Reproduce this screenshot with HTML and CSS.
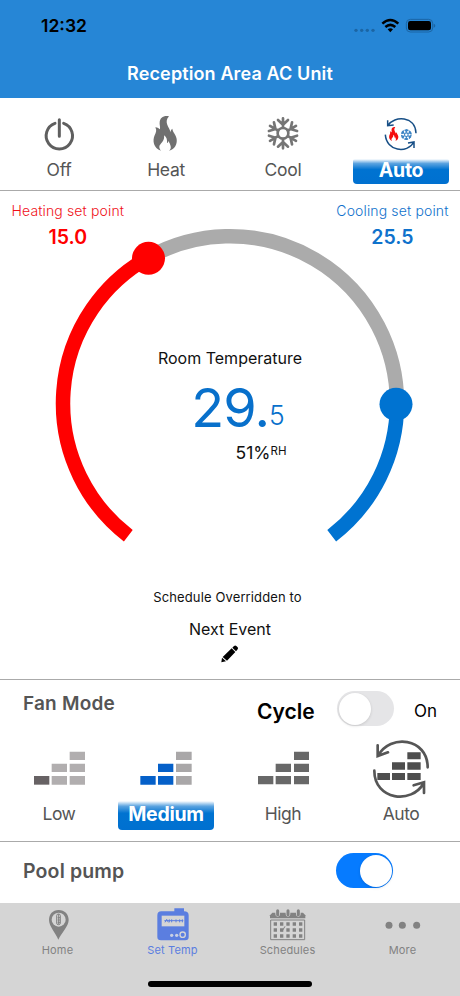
FILE: index.html
```html
<!DOCTYPE html>
<html lang="en">
<head>
<meta charset="utf-8">
<title>Reception Area AC Unit</title>
<link rel="stylesheet" href="styles.css">
</head>
<body>
<header class="header">
  <div class="status">
    <span class="clock">12:32</span>
    <svg class="status-icons" viewBox="1060 50 252 50">
      <g fill="#1b65a4"><circle cx="1069" cy="90" r="5"/><circle cx="1086" cy="90" r="5"/><circle cx="1103" cy="90" r="5"/><circle cx="1120" cy="90" r="5"/></g>
      <g fill="none" stroke="#000" stroke-width="7.5"><path d="M1148 70Q1172 48 1196 70"/><path d="M1157 80Q1172 67 1187 80"/></g>
      <path d="M1164 87Q1172 80 1180 87L1172 96Z"/>
      <rect x="1220" y="57" width="79" height="38" rx="12" fill="none" stroke="#1b65a4" stroke-width="3"/>
      <rect x="1225" y="62" width="69" height="28" rx="7"/>
      <path d="M1302 70q5 1 5 6t-5 6z" fill="#1b65a4"/>
    </svg>
  </div>
  <h1 class="title">Reception Area AC Unit</h1>
</header>

<nav class="modes">
  <div class="mode">
    <svg class="mode-icon" viewBox="117 42 120 120" fill="none" stroke="#5f5f5f" stroke-width="9" stroke-linecap="round"><path d="M165 70A39.500 39.500 0 1 0 191 70M178 59V109"/></svg>
    <span class="label off">Off</span>
  </div>
  <div class="mode">
    <svg class="mode-icon" viewBox="438 42 120 120" fill="#707070"><path id="flame" d="M507 49C490 46 480 54 479 67C478 74 481 78 480 88C477 86 473 82 466 82C471 91 468 98 464 106C457 122 460 145 483 152C476 144 477 137 482 132C488 125 494 119 492 106C500 111 502 120 501 129C504 128 505 126 505 122C511 133 517 145 507 152C525 147 532 133 530 117C528 103 518 97 517 86C513 89 512 92 512 97C509 82 490 68 507 49Z"/></svg>
    <span class="label heat">Heat</span>
  </div>
  <div class="mode">
    <svg class="mode-icon" viewBox="99 42 120 120" fill="none" stroke="#757575" stroke-width="8" stroke-linecap="round">
      <defs><path id="arm" d="M0-17V-45M0-26L-15-40M0-26L15-40"/></defs>
      <g transform="translate(159 100)"><circle r="16"/><use href="#arm"/><use href="#arm" transform="rotate(60)"/><use href="#arm" transform="rotate(120)"/><use href="#arm" transform="rotate(180)"/><use href="#arm" transform="rotate(240)"/><use href="#arm" transform="rotate(300)"/></g>
    </svg>
    <span class="label cool">Cool</span>
  </div>
  <div class="mode">
    <svg class="mode-icon" viewBox="453 42 120 120">
      <g fill="none" stroke="#174f86" stroke-width="4.500"><path d="M473 77C493 45 557 48 558 100M473 61V77L491 75M466 104C469 153 531 163 552 126M534 129L552 126V144"/></g>
      <use href="#flame" fill="#f50d0d" transform="translate(295.500 62) scale(.395 .4)"/>
      <g transform="translate(529 104) scale(.36)" fill="none" stroke="#3a83c4" stroke-width="9"><circle r="15"/><circle r="40" stroke-dasharray="28 13.900" stroke-dashoffset="-7"/><use href="#arm"/><use href="#arm" transform="rotate(60)"/><use href="#arm" transform="rotate(120)"/><use href="#arm" transform="rotate(180)"/><use href="#arm" transform="rotate(240)"/><use href="#arm" transform="rotate(300)"/></g>
    </svg>
    <span class="label active">Auto</span>
  </div>
</nav>

<main class="dial">
  <svg class="ring" viewBox="0 191 460 365" fill="none" stroke-width="14.500">
    <path stroke="#ababab" d="M148.500 257.500A167 167 0 0 1 397 403.500"/>
    <path stroke="#f00" d="M128.300 535.700A167 167 0 0 1 148.500 257.500"/>
    <path stroke="#0073d1" d="M397 403.500A167 167 0 0 1 331.700 535.700"/>
    <circle cx="148.500" cy="258.300" r="16.500" fill="#f00"/>
    <circle cx="396" cy="404.300" r="16.500" fill="#0073d1"/>
  </svg>
  <div class="dial-text">
    <div class="points">
      <div class="point heating"><span class="point-name">Heating set point</span><b class="point-value">15.0</b></div>
      <div class="point cooling"><span class="point-name">Cooling set point</span><b class="point-value">25.5</b></div>
    </div>
    <div class="room">Room Temperature</div>
    <div class="temp"><span class="whole">29.</span><span class="tenth">5</span></div>
    <div class="humidity"><span class="rh-value">51%</span><span class="rh">RH</span></div>
    <div class="override">Schedule Overridden to</div>
    <div class="event">Next Event</div>
    <svg class="pencil" viewBox="515 436 54 54"><path d="M516 488L518 474L530 485ZM520 472L547 446L558 457L533 483ZM549 444L554 439Q558 436 561 439L565 443Q568 446 564 450L560 455Z"/></svg>
  </div>
</main>

<section class="fan">
  <div class="fan-head">
    <h2 class="fan-title">Fan Mode</h2>
    <span class="cycle">Cycle</span>
    <span class="switch"></span>
    <span class="on">On</span>
  </div>
  <div class="speeds">
    <div class="speed">
      <svg class="speed-icon" viewBox="84 174 186 186" fill="#b1aeaf"><path fill="#676264" d="M102 288h46v26h-46z"/><path d="M155 288h46v26h-46zM209 288h46v26h-46zM155 251h46v25h-46zM209 251h46v25h-46zM209 215h46v25h-46z"/></svg>
      <span class="label low">Low</span>
    </div>
    <div class="speed">
      <svg class="speed-icon" viewBox="405 174 186 186" fill="#0560c9"><path d="M421 288h46v26h-46zM474 288h46v26h-46zM474 251h46v25h-46z"/><path fill="#a9a7a8" d="M528 288h47v26h-47zM528 251h47v25h-47zM528 215h47v25h-47z"/></svg>
      <span class="label active">Medium</span>
    </div>
    <div class="speed">
      <svg class="speed-icon" viewBox="66 174 186 186" fill="#686868"><path d="M84 288h46v25h-46zM137 288h46v25h-46zM192 288h45v25h-45zM137 251h46v25h-46zM192 251h45v25h-45zM192 215h45v25h-45z"/></svg>
      <span class="label high">High</span>
    </div>
    <div class="speed">
      <svg class="speed-icon" viewBox="421 174 186 186" fill="#4e4e4e"><path d="M443 279h38v21h-38zM487 279h39v21h-39zM533 279h40v21h-40zM487 247h39v22h-39zM533 247h40v22h-40zM533 217h40v21h-40z"/><g fill="none" stroke="#565656" stroke-width="8" stroke-linecap="round"><path d="M445 228C481 160 594 174 594 262M444 196V228L475 217M434 272C434 361 547 374 582 309M552 316L583 307V339"/></g></svg>
      <span class="label auto">Auto</span>
    </div>
  </div>
</section>

<section class="pool">
  <h2 class="pool-title">Pool pump</h2>
  <span class="switch checked"></span>
</section>

<footer class="tabs">
  <div class="tab">
    <svg class="tab-icon" viewBox="113 200 120 105"><path fill="#828282" d="M175 209C157 209 146 222 146 239C146 258 165 276 174 298C184 276 205 258 205 239C205 222 193 209 175 209Z"/><circle cx="175" cy="238" r="21" fill="#d5d5d5"/><g fill="none" stroke="#828282" stroke-width="3"><rect x="169" y="221" width="11" height="32" rx="5"/><path d="M172 232h7M172 239h7M172 246h7M175 221v31"/></g></svg>
    <span class="tab-label home">Home</span>
  </div>
  <div class="tab current">
    <svg class="tab-icon" viewBox="458 200 120 105"><path fill="#5b7ee0" d="M522 213V204H551V213Q565 213 565 225V290Q565 300 555 300H482Q471 300 471 290V225Q471 213 483 213Z"/><path fill="#d5d5d5" d="M484 226h68v32h-68z"/><path d="M492 241H549M494 246l5-9 5 9M507 237v9M514 237v9M527 237v9M538 237v9M546 237v9" fill="none" stroke="#5b7ee0" stroke-width="3"/><circle cx="514" cy="285" r="5" fill="#c8d0e4"/><circle cx="529" cy="285" r="5" fill="#c8d0e4"/><circle cx="547" cy="283" r="8" fill="none" stroke="#d5d5d5" stroke-width="4"/></svg>
    <span class="tab-label settemp">Set Temp</span>
  </div>
  <div class="tab">
    <svg class="tab-icon" viewBox="113 200 120 105"><path fill="#828282" d="M119 234V225L126 217H218L225 225V234Z"/><g stroke="#d5d5d5" stroke-width="14" stroke-linecap="round"><path d="M142 214v8M173 214v8M204 214v8"/></g><g stroke="#828282" stroke-width="9" stroke-linecap="round"><path d="M142 211v12M173 211v12M204 211v12"/></g><path fill="none" stroke="#828282" stroke-width="3" d="M121 239H223V298H121Z"/><path stroke="#828282" stroke-width="10" stroke-dasharray="10 9" d="M130 251H218M130 269H218M130 287H218"/><path d="M150 266l5 7 9-15" fill="none" stroke="#828282" stroke-width="3"/></svg>
    <span class="tab-label schedules">Schedules</span>
  </div>
  <div class="tab">
    <svg class="tab-icon" viewBox="457 200 120 105" fill="#828282"><circle cx="475" cy="255" r="10.500"/><circle cx="515" cy="255" r="10.500"/><circle cx="558" cy="255" r="10.500"/></svg>
    <span class="tab-label more">More</span>
  </div>
  <div class="home-bar"></div>
</footer>
</body>
</html>
```
FILE: styles.css
```css
* { box-sizing: border-box; }
body { margin: 0; width: 460px; height: 996px; overflow: hidden; background: #fff; color: #111; font-family: Inter, "Liberation Sans", sans-serif; white-space: nowrap; }
h1, h2 { margin: 0; }
svg { display: block; }
.header { height: 98px; background: #2686d6; }
.status { display: flex; justify-content: space-between; padding: 15px 23px 0 41px; height: 58px; }
.clock { font-size: 17.500px; line-height: 21px; font-weight: 600; color: #000; }
.status-icons { width: 84px; height: 16.7px; margin-top: 1.700px; }
.title { font-size: 18px; line-height: 32px; font-weight: 600; color: #fff; text-align: center; letter-spacing: .12px; }

.modes { display: grid; grid-template-columns: 118px 96px 138px 98px; height: 93px; padding-top: 16px; border-bottom: 1.500px solid #aaa; }
.mode, .speed { display: flex; flex-direction: column; align-items: center; }
.mode-icon { width: 40px; height: 40px; }
.label { font-size: 17.500px; line-height: 30px; color: #555; letter-spacing: -.3px; }
.mode .label { margin-top: 1px; }
.label.active { width: 96px; color: #fff; font-size: 19.500px; font-weight: 700; text-align: center; border-radius: 2px 2px 4px 4px; background: linear-gradient(#fff, #5ba3e0 18%, #0073d1 42%, #0070d0); }
.mode .active { margin-top: 5px; height: 25px; line-height: 22px; }

.dial { display: grid; height: 488px; }
.ring { grid-area: 1 / 1; width: 460px; height: 365px; }
.dial-text { grid-area: 1 / 1; display: flex; flex-direction: column; align-items: center; }
.points { width: 100%; display: flex; justify-content: space-between; padding: 10px 11.500px 0; height: 157px; }
.point { display: flex; flex-direction: column; align-items: center; }
.point-name { font-size: 14px; line-height: 20px; font-weight: 300; letter-spacing: .14px; }
.point-value { font-size: 19.500px; line-height: 20px; margin-top: 6px; font-weight: 600; }
.heating { color: #f01018; }
.heating .point-value { color: #f00; }
.cooling { color: #0f72cc; }
.room { font-size: 16px; line-height: 20px; }
.temp { display: flex; color: #0870cb; margin-top: 10px; height: 60px; padding-left: 16px; }
.whole { font-size: 54px; line-height: 60px; font-weight: 400; letter-spacing: -.9px; }
.tenth { font-size: 26.500px; line-height: 75px; font-weight: 350; }
.humidity { display: flex; height: 24px; margin-top: 3px; padding-left: 62px; }
.rh-value { font-size: 17.500px; line-height: 24px; }
.rh { font-size: 11.500px; line-height: 20px; }
.override { font-size: 13px; line-height: 20px; margin-top: 121.500px; margin-right: 5px; letter-spacing: .13px; }
.event { font-size: 16px; line-height: 20px; margin-top: 12px; }
.pencil { width: 18px; height: 18px; margin-top: 6px; }

.fan { height: 163px; border: solid #aaa; border-width: 1px 0; }
.fan-head { display: flex; height: 58px; align-items: flex-start; padding-left: 23px; }
.fan-title { font-size: 19px; line-height: 24px; margin-top: 12px; width: 234px; font-weight: 600; color: #555; letter-spacing: .2px; }
.cycle { font-size: 21px; line-height: 24px; margin-top: 19.500px; width: 80px; font-weight: 600; color: #000; }
.on { font-size: 17px; line-height: 24px; margin: 19px 0 0 20px; color: #000; }
.switch { display: block; width: 57px; height: 35px; border-radius: 18px; background: #e5e5e7; padding: 1.500px; margin-top: 11px; }
.switch::after { content: ""; display: block; width: 32px; height: 32px; border-radius: 50%; background: #fff; box-shadow: 0 1px 3px #0002; }
.switch.checked { background: #067bff; }
.switch.checked::after { margin-left: 22.500px; }
.speeds { display: grid; grid-template-columns: 118px 96px 138px 98px; }
.speed-icon { width: 62px; height: 62px; }
.speed .label { line-height: 28px; }
.speed .low, .speed .high, .speed .auto { letter-spacing: -.5px; }
.speed .active { margin-top: 1px; height: 29px; line-height: 26px; }

.pool { display: flex; justify-content: space-between; padding: 0 67px 0 23px; height: 61px; }
.pool-title { font-size: 19.500px; line-height: 24px; margin-top: 16.500px; font-weight: 600; color: #555; letter-spacing: .15px; }

.tabs { display: grid; grid-template-columns: repeat(4, 115px); grid-template-rows: 78px 6px; height: 93px; background: #d5d5d5; }
.tab { display: flex; flex-direction: column; align-items: center; padding-top: 3.700px; color: #828282; }
.tab.current { color: #5b7ee0; }
.tab-icon { width: 40px; height: 35px; }
.tab-label { font-size: 11px; line-height: 16px; letter-spacing: .15px; }
.home-bar { grid-column: 1 / -1; justify-self: center; width: 164px; height: 6px; border-radius: 3px; background: #000; }
```
